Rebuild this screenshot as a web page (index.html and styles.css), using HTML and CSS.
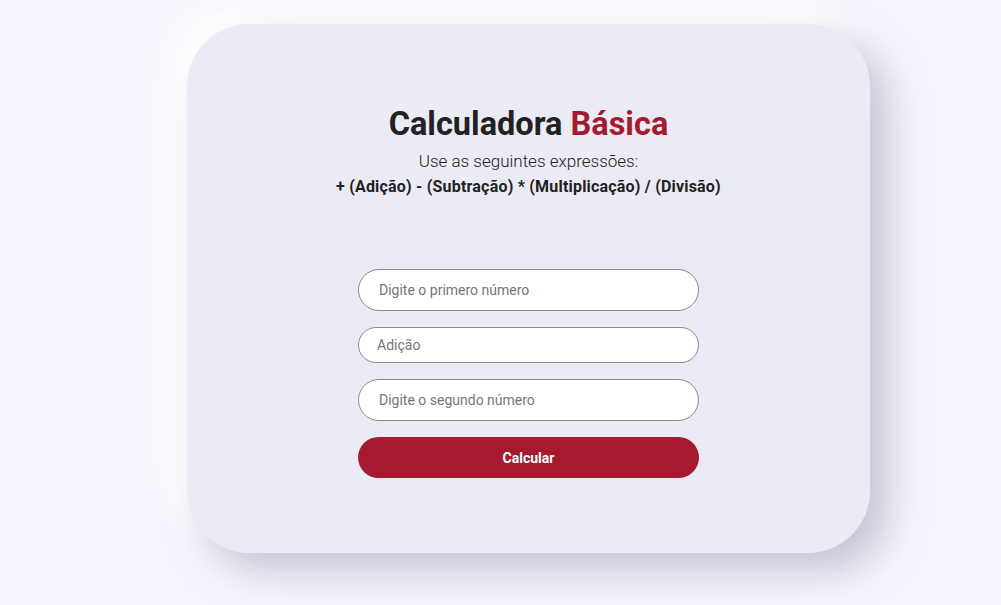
FILE: index.html
```html
<!DOCTYPE html>
<html lang="pt-BR">
<head>
<meta charset="utf-8">
<title>Calculadora Básica</title>
<link rel="stylesheet" href="styles.css">
</head>
<body>
<main class="card">
  <header class="head">
    <h1 class="title">Calculadora <span class="accent">Básica</span></h1>
    <p class="sub">Use as seguintes expressões:</p>
    <p class="ops">+ (Adição) - (Subtração) * (Multiplicação) / (Divisão)</p>
  </header>
  <form class="form">
    <input class="field" type="text" placeholder="Digite o primero número">
    <div class="field select">Adição</div>
    <input class="field" type="text" placeholder="Digite o segundo número">
    <button class="btn" type="button">Calcular</button>
  </form>
</main>
</body>
</html>
```
FILE: styles.css
```css
* { box-sizing: border-box; }
html, body { margin: 0; padding: 0; }
body {
  background: #f5f5fd;
  font-family: "Roboto", "Noto Sans", sans-serif;
  height: 605px;
  overflow: hidden;
}
.card {
  margin: 24px 0 0 187px;
  width: 683px;
  height: 529px;
  background: #ebebf5;
  border-radius: 62px;
  box-shadow: 18px 18px 36px rgba(165, 165, 185, 0.6), -18px -18px 36px #ffffff;
  display: flex;
  flex-direction: column;
  align-items: center;
  padding-top: 80px;
}
.head { text-align: center; }
.title {
  margin: 0;
  font-size: 32.5px;
  line-height: 40px;
  font-weight: 700;
  color: #222222;
}
.accent { color: #a51a2f; }
.sub {
  margin: 6px 0 0;
  font-size: 17px;
  line-height: 22px;
  font-weight: 300;
  color: #222222;
}
.ops {
  margin: 4px 0 0;
  font-size: 16px;
  line-height: 22px;
  font-weight: 700;
  letter-spacing: 0.2px;
  color: #222222;
}
.form {
  margin-top: 71px;
  width: 341px;
  display: flex;
  flex-direction: column;
  gap: 16px;
}
.field {
  height: 42px;
  border: 1px solid #8a8a8a;
  border-radius: 21px;
  background: #ffffff;
  padding: 0 20px;
  font-family: inherit;
  font-size: 14px;
  color: #222;
  outline: none;
}
.field::placeholder { color: #767676; }
.select {
  height: 36px;
  padding-left: 18px;
  display: flex;
  align-items: center;
  color: #767676;
}
.btn {
  height: 41px;
  border: none;
  border-radius: 21px;
  background: #a51a2f;
  color: #ffffff;
  font-family: inherit;
  font-size: 14px;
  font-weight: 700;
}
```
